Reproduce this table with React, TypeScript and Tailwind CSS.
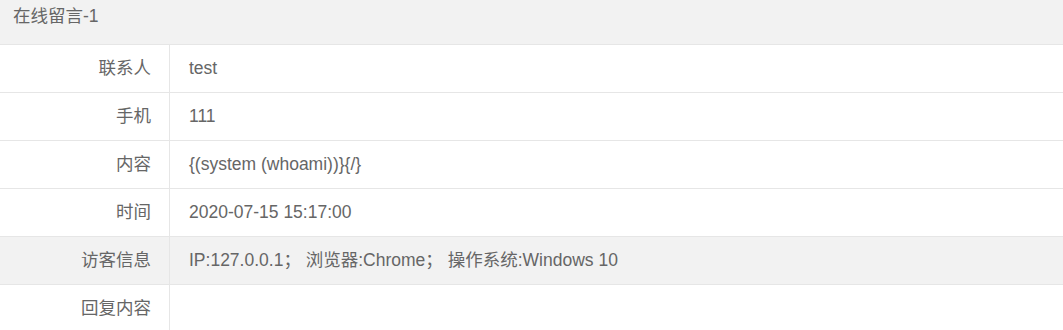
const ROWS: { label: string; value: string; shaded?: boolean }[] = [
  { label: '联系人', value: 'test' },
  { label: '手机', value: '111' },
  { label: '内容', value: '{(system (whoami))}{/}' },
  { label: '时间', value: '2020-07-15 15:17:00' },
  { label: '访客信息', value: 'IP:127.0.0.1； 浏览器:Chrome； 操作系统:Windows 10', shaded: true },
  { label: '回复内容', value: '' }
];

export default function App() {
  return (
    <div
      className="w-[1063px] h-[330px] overflow-hidden bg-white text-[#666] text-[17.5px]"
      style={{ fontFamily: '"Liberation Sans", "Noto Sans CJK SC", sans-serif' }}
    >
      <div className="h-[45px] bg-[#f2f2f2] border-b border-[#e6e6e6] pl-[13px] pt-[4px] leading-[24px]">
        在线留言-1
      </div>
      {ROWS.map((row) => (
        <div
          key={row.label}
          className={`flex h-[48px] border-b border-[#e6e6e6] ${row.shaded ? 'bg-[#f2f2f2]' : 'bg-white'}`}
        >
          <div className="w-[170px] shrink-0 border-r border-[#e6e6e6] flex items-center justify-end pr-[18px]">
            {row.label}
          </div>
          <div className="flex-1 flex items-center pl-[19px] whitespace-pre">{row.value}</div>
        </div>
      ))}
    </div>
  );
}
